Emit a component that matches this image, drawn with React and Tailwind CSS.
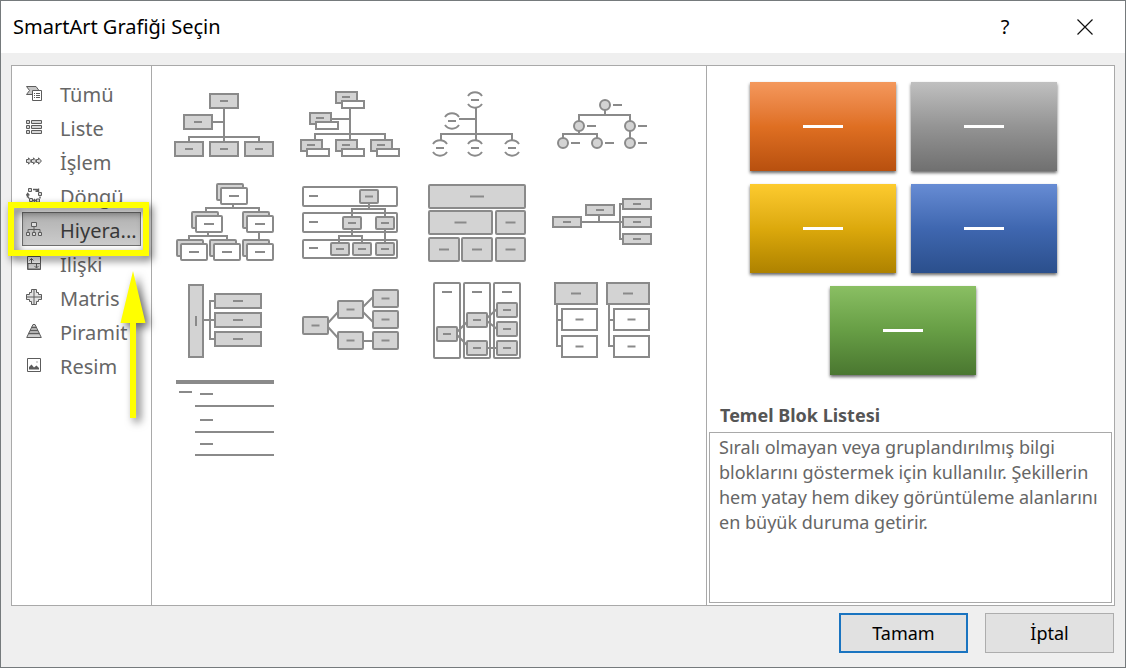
import React from "react";

const LINE = "#8a8a8a";
const FILL = "#d3d3d3";

/* ---- drawing helpers for the layout thumbnails ---- */

function Box({ x, y, w, h, white, blank, dash = 8, r = 0 }) {
  const cx = x + w / 2;
  const cy = y + h / 2;
  return (
    <g>
      <rect x={x} y={y} width={w} height={h} rx={r} fill={white ? "#fff" : FILL} stroke={LINE} strokeWidth="2" />
      {!blank && <path d={`M${cx - dash / 2} ${cy}h${dash}`} stroke={LINE} strokeWidth="2" />}
    </g>
  );
}

function Lines({ d, w = 2 }) {
  return <path d={d} fill="none" stroke={LINE} strokeWidth={w} />;
}

function Stack({ x, y }) {
  return (
    <g>
      <Box x={x - 4} y={y - 4} w={26} h={16} r={1} blank />
      <Box x={x} y={y} w={26} h={16} r={1} white dash={10} />
    </g>
  );
}

function Titled({ x, y }) {
  return (
    <g>
      <rect x={x} y={y} width="21" height="11" fill={FILL} stroke={LINE} strokeWidth="2" />
      <path d={`M${x + 6} ${y + 5}h8`} stroke={LINE} strokeWidth="2" />
      <rect x={x + 6} y={y + 9} width="22" height="7" fill="#fff" stroke={LINE} strokeWidth="2" />
    </g>
  );
}

function HalfCircle({ x, y }) {
  return (
    <Lines
      d={`M${x - 7} ${y - 4}A8.5 8.5 0 0 1 ${x + 7} ${y - 4}M${x - 7} ${y + 4}A8.5 8.5 0 0 0 ${x + 7} ${y + 4}M${x - 4} ${y}h8`}
    />
  );
}

function Dot({ x, y }) {
  return (
    <g>
      <circle cx={x} cy={y} r="5" fill={FILL} stroke={LINE} strokeWidth="2" />
      <path d={`M${x + 8} ${y}h9`} stroke={LINE} strokeWidth="2" />
    </g>
  );
}

const layouts = [
  {
    name: "Kuruluş Şeması",
    art: (
      <>
        <Lines d="M63 32V66M51 46H63M28 66V61H98V66" />
        <Box x={49} y={18} w={28} h={14} />
        <Box x={23} y={39} w={28} h={14} />
        <Box x={14} y={66} w={28} h={14} />
        <Box x={49} y={66} w={28} h={14} />
        <Box x={84} y={66} w={28} h={14} />
      </>
    ),
  },
  {
    name: "Ad ve Başlık Kuruluş Şeması",
    art: (
      <>
        <Lines d="M63 32V64M44 43H63M28 64V58H98V64" />
        <Titled x={49} y={16} />
        <Titled x={23} y={37} />
        <Titled x={14} y={64} />
        <Titled x={49} y={64} />
        <Titled x={84} y={64} />
      </>
    ),
  },
  {
    name: "Yarım Daire Kuruluş Şeması",
    art: (
      <>
        <Lines d="M63 32V64M46 43H63M28 64V58H99V64" />
        <HalfCircle x={62} y={24} />
        <HalfCircle x={39} y={45} />
        <HalfCircle x={27} y={72} />
        <HalfCircle x={62} y={72} />
        <HalfCircle x={99} y={72} />
      </>
    ),
  },
  {
    name: "Daire Resim Hiyerarşisi",
    art: (
      <>
        <Lines d="M66 34V39M40 45V39H91V67M40 55V58M24 62V58H58V62" />
        <Dot x={66} y={29} />
        <Dot x={40} y={50} />
        <Dot x={91} y={50} />
        <Dot x={24} y={67} />
        <Dot x={58} y={67} />
        <Dot x={91} y={67} />
      </>
    ),
  },
  {
    name: "Hiyerarşi",
    art: (
      <>
        <Lines d="M72 30V34M45 40V34H98V66M47 58V62M28 68V62H66V68" />
        <Stack x={60} y={14} />
        <Stack x={35} y={42} />
        <Stack x={86} y={42} />
        <Stack x={20} y={70} />
        <Stack x={53} y={70} />
        <Stack x={86} y={70} />
      </>
    ),
  },
  {
    name: "Etiketli Hiyerarşi",
    art: (
      <>
        <Box x={16} y={13} w={94} h={19} r={1} white blank />
        <Box x={16} y={39} w={94} h={19} r={1} white blank />
        <Box x={16} y={66} w={94} h={18} r={1} white blank />
        <Lines d="M22 22h9M22 48h9M22 74h9M82 29V35M65 43V35H98V69M65 55V62M52 69V62H75V69" />
        <Box x={73} y={16} w={18} h={13} r={1} />
        <Box x={56} y={43} w={18} h={12} r={1} />
        <Box x={89} y={43} w={18} h={12} r={1} />
        <Box x={44} y={69} w={18} h={12} r={1} />
        <Box x={66} y={69} w={18} h={12} r={1} />
        <Box x={89} y={69} w={18} h={12} r={1} />
      </>
    ),
  },
  {
    name: "Tablo Hiyerarşisi",
    art: (
      <>
        <Box x={16} y={11} w={96} h={23} r={1} dash={14} />
        <Box x={16} y={37} w={63} h={23} r={1} dash={12} />
        <Box x={83} y={37} w={29} h={23} r={1} dash={10} />
        <Box x={16} y={64} w={30} h={23} r={1} dash={10} />
        <Box x={49} y={64} w={30} h={23} r={1} dash={10} />
        <Box x={83} y={64} w={29} h={23} r={1} dash={10} />
      </>
    ),
  },
  {
    name: "Yatay Kuruluş Şeması",
    art: (
      <>
        <Lines d="M42 48H84M60 41V48M84 30H81V65H84" />
        <Box x={14} y={43} w={28} h={10} />
        <Box x={47} y={31} w={28} h={10} />
        <Box x={84} y={25} w={28} h={10} />
        <Box x={84} y={43} w={28} h={10} />
        <Box x={84} y={60} w={28} h={10} />
      </>
    ),
  },
  {
    name: "Yatay Çok Düzeyli Hiyerarşi",
    art: (
      <>
        <Lines d="M42 48H54M54 29H49V67H54" />
        <Box x={28} y={13} w={14} h={72} blank />
        <Lines d="M35 44v10" />
        <Box x={54} y={22} w={46} h={14} dash={10} />
        <Box x={54} y={41} w={46} h={14} dash={10} />
        <Box x={54} y={60} w={46} h={14} dash={10} />
      </>
    ),
  },
  {
    name: "Yatay Hiyerarşi",
    art: (
      <>
        <Lines d="M41 51L51 40M41 55L51 66M75 36L86 25M75 39L86 50M75 69H86" />
        <Box x={16} y={45} w={25} h={17} r={1} />
        <Box x={51} y={29} w={25} h={17} r={1} />
        <Box x={51} y={60} w={25} h={17} r={1} />
        <Box x={86} y={18} w={25} h={17} r={1} />
        <Box x={86} y={39} w={25} h={17} r={1} />
        <Box x={86} y={60} w={25} h={17} r={1} />
      </>
    ),
  },
  {
    name: "Yatay Etiketli Hiyerarşi",
    art: (
      <>
        <Box x={21} y={11} w={26} h={75} r={1} white blank />
        <Box x={51} y={11} w={26} h={75} r={1} white blank />
        <Box x={81} y={11} w={26} h={75} r={1} white blank />
        <Lines d="M29 20h10M59 20h10M89 20h10M44 60L54 50M44 63L54 73M74 46L84 37M74 49L84 57M74 76H84" />
        <Box x={24} y={55} w={20} h={14} r={1} />
        <Box x={54} y={41} w={20} h={14} r={1} />
        <Box x={54} y={69} w={20} h={14} r={1} />
        <Box x={84} y={31} w={20} h={14} r={1} />
        <Box x={84} y={50} w={20} h={14} r={1} />
        <Box x={84} y={69} w={20} h={14} r={1} />
      </>
    ),
  },
  {
    name: "Hiyerarşi Listesi",
    art: (
      <>
        <Lines d="M18 32V74H23M18 48H23M70 32V74H76M70 48H76" />
        <Box x={16} y={11} w={42} h={21} dash={10} />
        <Box x={68} y={11} w={42} h={21} dash={10} />
        <Box x={23} y={37} w={35} h={21} white />
        <Box x={23} y={64} w={35} h={21} white />
        <Box x={75} y={37} w={35} h={21} white />
        <Box x={75} y={64} w={35} h={21} white />
      </>
    ),
  },
  {
    name: "Çizgili Liste",
    art: (
      <>
        <Lines w={4} d="M15 12H113" />
        <Lines d="M18 22H31M39 24H52M34 36H113M39 50H52M34 62H113M39 74H52M34 85H113" />
      </>
    ),
  },
];

/* ---- category icons, 16 x 16 ---- */

function Icon({ children }) {
  return (
    <svg viewBox="0 0 16 16" className="size-4 shrink-0" fill="none" stroke="#5c5c5c" strokeWidth="1" aria-hidden="true">
      {children}
    </svg>
  );
}

const categories = [
  {
    label: "Tümü",
    icon: (
      <Icon>
        <path d="M.5 1.5H10L13 5.5 10 9.5H.5L3.5 5.5z" fill="#c6c6c6" />
        <path d="M6.5 5.5H15.5V15.5H6.5z" fill="#fff" />
        <path d="M8 8.5h1M10 8.5h4M8 10.5h1M10 10.5h4M8 12.5h1M10 12.5h4" />
      </Icon>
    ),
  },
  {
    label: "Liste",
    icon: (
      <Icon>
        <path
          d="M.5 1.5h3v3h-3zM5.5 1.5h10v3h-10zM.5 6.5h3v3h-3zM5.5 6.5h10v3h-10zM.5 11.5h3v3h-3zM5.5 11.5h10v3h-10z"
          fill="#d6d6d6"
        />
      </Icon>
    ),
  },
  {
    label: "İşlem",
    icon: (
      <Icon>
        <path
          d="M.5 6.5H2.5V4.8L5.3 8 2.5 11.2V9.5H.5zM5.5 6.5H7.5V4.8L10.3 8 7.5 11.2V9.5H5.5zM10.5 6.5H12.5V4.8L15.4 8 12.5 11.2V9.5H10.5z"
          fill="#d6d6d6"
        />
      </Icon>
    ),
  },
  {
    label: "Döngü",
    icon: (
      <Icon>
        <path d="M2.5 1.5h3v3h-3zM12.5 5.5h3v3h-3zM10.5 12h3v3h-3zM3.5 11.5h3v3h-3z" fill="#d6d6d6" />
        <path
          d="M7 2.5h4l1 1.5M9.5 4.2h3V1.5M1.5 10.5V7M.3 8.5L1.7 6.5 3.3 8.5M2 9.5l1 2M7.5 13.5H10M9 12l-1.5 1.5L9 15M14 9.5v2"
          strokeWidth="1.4"
        />
      </Icon>
    ),
  },
  {
    label: "Hiyera...",
    selected: true,
    icon: (
      <Icon>
        <path d="M5.5 1.5h5v4h-5zM.5 11.5h3v3h-3zM6.5 11.5h3v3h-3zM12.5 11.5h3v3h-3z" fill="#dcdcdc" />
        <path d="M8 5.5V11.5M2 11.5V8.5H14V11.5" />
      </Icon>
    ),
  },
  {
    label: "İlişki",
    icon: (
      <Icon>
        <path d="M1.5 1.5h13v13h-13z" fill="#fff" />
        <path d="M2 8.5h12.5V14H2z" fill="#d0d0d0" />
        <path d="M5.5 8V4M3.5 5.5l2-2 2 2M10.5 9v4M8.5 11l2 2 2-2" />
      </Icon>
    ),
  },
  {
    label: "Matris",
    icon: (
      <Icon>
        <path d="M5.5.5H10.5V3.5H12.5V5.5H15.5V10.5H12.5V12.5H10.5V15.5H5.5V12.5H3.5V10.5H.5V5.5H3.5V3.5H5.5z" fill="#e2e2e2" />
        <path d="M8 .5V15.5M.5 8H15.5" />
      </Icon>
    ),
  },
  {
    label: "Piramit",
    icon: (
      <Icon>
        <path d="M7 1.5H9L15.3 14.5H.7z" fill="#cfcfcf" />
        <path d="M5.5 4.5h5M4 7.5h8M2.5 10.5h11" strokeWidth="1.3" />
      </Icon>
    ),
  },
  {
    label: "Resim",
    icon: (
      <Icon>
        <path d="M1.5 1.5h13v13h-13z" fill="#fff" />
        <path d="M3 12.5V10L5.5 7.5 8 10.5 10.5 8.5 13 11v1.5z" fill="#5c5c5c" stroke="none" />
        <path d="M10 4.5h2v1h-2z" fill="#aaa" stroke="none" />
      </Icon>
    ),
  },
];

const blocks = [
  "from-[#f4985c] via-[#df6f22] to-[#b8500e]",
  "from-[#c0c0c0] via-[#949494] to-[#707070]",
  "from-[#fdcb2e] via-[#dca90c] to-[#ae8200]",
  "from-[#678cd4] via-[#3f67b0] to-[#2b4f8c]",
  "from-[#8abf63] via-[#679e45] to-[#4a7730]",
];

function Highlight() {
  return (
    <>
      <span className="pointer-events-none absolute -top-[10px] -right-2 -bottom-[10px] -left-[14px] z-10 border-6 border-[#ffff00] drop-shadow-[3px_4px_4px_rgba(0,0,0,0.6)]" />
      <svg
        viewBox="0 0 26 148"
        className="pointer-events-none absolute top-[59px] -right-[5px] z-10 h-[148px] w-[26px] overflow-visible drop-shadow-[4px_4px_4px_rgba(0,0,0,0.6)]"
        aria-hidden="true"
      >
        <path d="M13 0L25.5 52H16V147H10V52H.5z" fill="#ffff00" />
      </svg>
    </>
  );
}

export default function App() {
  return (
    <div
      role="dialog"
      aria-labelledby="dialog-title"
      className="flex min-h-screen w-full flex-col border border-[#757a7c] bg-[#efefef] font-['Noto_Sans','Open_Sans',sans-serif] text-black"
    >
      <header className="flex h-[52px] items-center bg-white pl-3">
        <h1 id="dialog-title" className="flex-1 text-xl">SmartArt Grafiği Seçin</h1>
        <button type="button" aria-label="Yardım" className="flex h-full w-20 items-center justify-center text-xl">
          ?
        </button>
        <button type="button" aria-label="Kapat" className="flex h-full w-20 items-center justify-center">
          <svg viewBox="0 0 16 16" className="size-4" fill="none" stroke="#111" strokeWidth="1.2" aria-hidden="true">
            <path d="M.5.5L15.5 15.5M15.5.5L.5 15.5" />
          </svg>
        </button>
      </header>

      <main className="mx-[10px] mt-3 flex flex-1 border border-[#a9a9a9] bg-white">
        <nav aria-label="Kategoriler" className="w-[140px] shrink-0 border-r border-[#a9a9a9] px-[10px] pt-[10px]">
          <ul>
            {categories.map((c) => (
              <li key={c.label} className="relative">
                <button
                  type="button"
                  aria-pressed={!!c.selected}
                  className={
                    "flex h-[34px] w-full items-center gap-[18px] border pl-[3px] text-left text-xl whitespace-nowrap " +
                    (c.selected
                      ? "border-[#6f6f6f] bg-linear-to-b from-[#b0b0b0] to-[#cbcbcb] text-[#383838]"
                      : "border-transparent text-[#666]")
                  }
                >
                  {c.icon}
                  <span className="pt-1">{c.label}</span>
                </button>
                {c.selected && <Highlight />}
              </li>
            ))}
          </ul>
        </nav>

        <section aria-label="Düzenler" className="min-w-0 flex-1 pt-[10px] pl-[9px]">
          <div className="grid grid-cols-[repeat(auto-fill,126px)]">
            {layouts.map((l) => (
              <button key={l.name} type="button" aria-label={l.name} className="h-[98px]">
                <svg viewBox="0 0 126 98" className="h-[98px] w-[126px]" aria-hidden="true">
                  {l.art}
                </svg>
              </button>
            ))}
          </div>
        </section>

        <aside className="flex w-[408px] shrink-0 flex-col border-l border-[#a9a9a9] p-[2px]">
          <div className="flex w-[388px] flex-wrap justify-center gap-x-[15px] gap-y-[13px] pt-[14px]">
            {blocks.map((b) => (
              <div
                key={b}
                className={"flex h-[89px] w-[146px] items-center justify-center bg-linear-to-b shadow-[0_2px_3px_rgba(0,0,0,0.6)] " + b}
              >
                <span className="h-[3px] w-10 bg-white" />
              </div>
            ))}
          </div>
          <h2 className="mt-[26px] pl-[11px] text-lg font-bold text-[#555]">Temel Blok Listesi</h2>
          <p className="mt-[3px] flex-1 border border-[#a9a9a9] px-[9px] pt-[2px] text-lg leading-[25px] text-[#666]">
            Sıralı olmayan veya gruplandırılmış bilgi bloklarını göstermek için kullanılır. Şekillerin hem yatay hem dikey
            görüntüleme alanlarını en büyük duruma getirir.
          </p>
        </aside>
      </main>

      <footer className="flex justify-end gap-[17px] pt-[7px] pr-[11px] pb-[14px]">
        <button type="button" className="h-10 w-[129px] border-2 border-[#1a74c0] bg-[#e1e1e1] text-lg">
          Tamam
        </button>
        <button type="button" className="h-10 w-[129px] border border-[#adadad] bg-[#e1e1e1] text-lg">
          İptal
        </button>
      </footer>
    </div>
  );
}
